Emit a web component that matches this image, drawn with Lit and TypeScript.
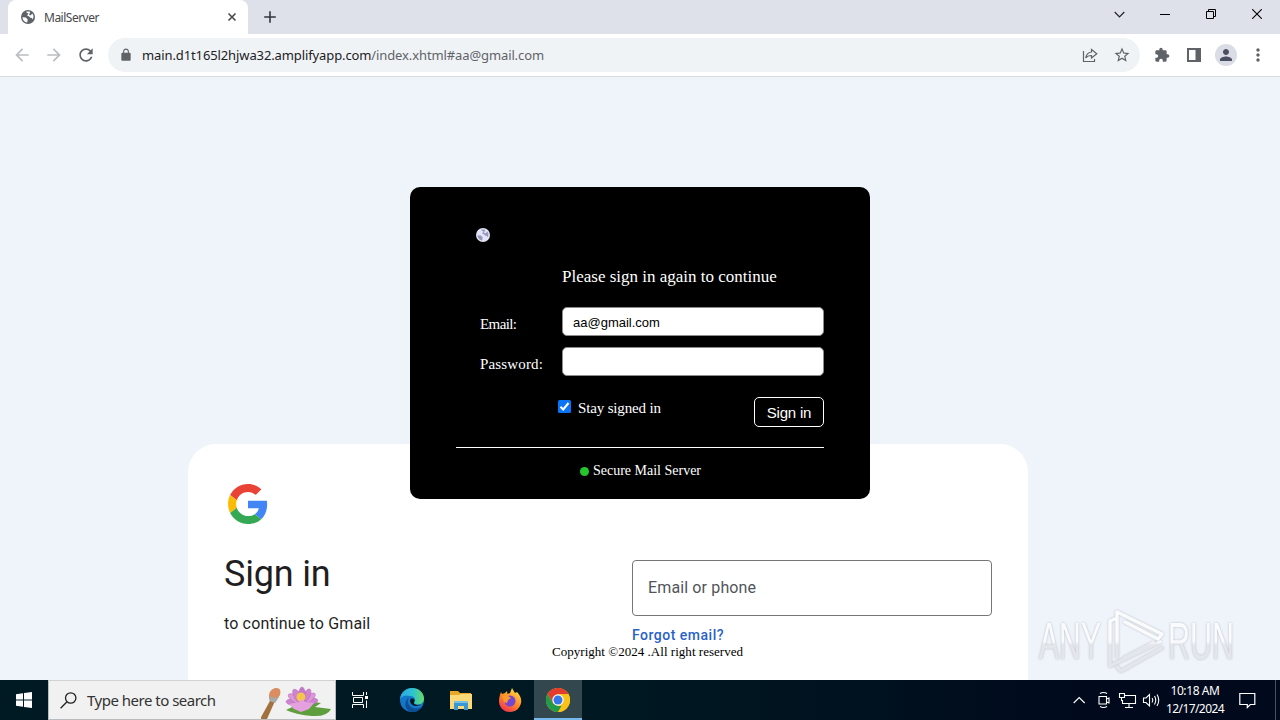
import { LitElement, html, css, svg } from "lit";
import { customElement } from "lit/decorators.js";

const icon = (path: string, size = 20) => html`
    <svg width=${size} height=${size} viewBox="0 0 24 24" fill="currentColor"><path d=${path}></path></svg>
`;

const tabGlobe = (size: number, sea: string, land: string) => html`
    <svg width=${size} height=${size} viewBox="0 0 14 14">
        <circle cx="7" cy="7" r="7" fill=${sea}></circle>
        <path fill=${land} d="M1.500 7.200 4.800 7.500 6.600 9.200 6.300 12.400 C3.600 12.200 1.500 9.800 1.500 7.200Z M5 1.900 C6 1.400 8 1.300 9 1.800 L8.700 3.800 6.800 4.200 6.300 6 8 6.300 9.300 7.800 11 8 11.600 9.500 C12.700 7.600 12.900 5.300 11.300 3.500 L9.800 5.200 8.600 5.300 8.200 4.200Z"></path>
    </svg>
`;

@customElement("browser-bar")
class BrowserBar extends LitElement {
    static styles = css`
        :host {
            display: block;
            font-family: "Noto Sans", "Open Sans", sans-serif;
            color: #202124;
        }

        svg {
            display: block;
            flex: none;
        }

        .tabs {
            display: flex;
            height: 34px;
            background: #dee1e9;
        }

        .tab {
            display: flex;
            align-items: center;
            box-sizing: border-box;
            width: 240px;
            margin-left: 8px;
            padding: 0 11px 0 13px;
            border-radius: 8px 8px 0 0;
            background: #fff;
            font-size: 12px;
        }

        .tab-title {
            flex: 1;
            margin-left: 9px;
            letter-spacing: -0.5px;
            color: #45484c;
        }

        .new-tab {
            display: flex;
            align-items: center;
            margin-left: 16px;
        }

        .window-buttons {
            display: flex;
            align-items: center;
            margin-left: auto;
            height: 28px;
        }

        .window-buttons span {
            display: flex;
            justify-content: center;
            width: 46px;
        }

        .toolbar {
            display: flex;
            align-items: center;
            box-sizing: border-box;
            height: 43px;
            padding: 0 12px;
            border-bottom: 1px solid #d9dbde;
            background: #fff;
            color: #5f6368;
        }

        .arrow {
            color: #bbbdc0;
        }

        .nav {
            display: flex;
            gap: 12px;
        }

        .address {
            display: flex;
            align-items: center;
            box-sizing: border-box;
            width: 1032px;
            height: 34px;
            margin-left: 12px;
            padding: 0 9px 0 11px;
            border-radius: 17px;
            background: #f0f3f6;
        }

        .url {
            flex: 1;
            margin-left: 9px;
            font-size: 13px;
            letter-spacing: -0.11px;
            white-space: nowrap;
        }

        .url b {
            font-weight: 400;
            color: #202124;
        }

        .address-icons {
            display: flex;
            gap: 14px;
        }

        .extras {
            display: flex;
            align-items: center;
            margin-left: 12px;
            gap: 12px;
        }

        .puzzle {
            display: flex;
            justify-content: center;
            width: 20px;
        }

        .avatar {
            display: flex;
            align-items: center;
            justify-content: center;
            width: 22px;
            height: 22px;
            margin: 0 -1px;
            border-radius: 50%;
            background: #dadce6;
            color: #4b4f63;
        }
    `;

    render() {
        return html`
            <div class="tabs">
                <div class="tab">
                    ${tabGlobe(14, "#5f6368", "#fff")}
                    <span class="tab-title">MailServer</span>
                    <svg width="10" height="10" viewBox="0 0 10 10" stroke="#45484c" stroke-width="1.600"><path d="M1.500 1.500 8.500 8.500M8.500 1.500 1.500 8.500"></path></svg>
                </div>
                <div class="new-tab">
                    <svg width="12" height="12" viewBox="0 0 12 12" stroke="#33363b" stroke-width="1.600"><path d="M6 .2V11.800M.2 6H11.800"></path></svg>
                </div>
                <div class="window-buttons">
                    <span><svg width="11" height="11" viewBox="0 0 11 11" fill="none" stroke="#222" stroke-width="1.200"><path d="M.7 3 5.500 7.800 10.300 3"></path></svg></span>
                    <span><svg width="10" height="10" viewBox="0 0 10 10" stroke="#000"><path d="M0 5.500H10"></path></svg></span>
                    <span><svg width="10" height="10" viewBox="0 0 10 10" fill="none" stroke="#000"><path d="M.5 2.500h7v7h-7zM2.500 2.500v-2h7v7h-2"></path></svg></span>
                    <span><svg width="10" height="10" viewBox="0 0 10 10" stroke="#000" stroke-width="1.100"><path d="M.2 .2 9.800 9.800M9.800 .2 .2 9.800"></path></svg></span>
                </div>
            </div>
            <div class="toolbar">
                <div class="nav">
                    <span class="arrow">${icon("M20 11H7.830l5.590-5.590L12 4l-8 8 8 8 1.410-1.410L7.830 13H20v-2z")}</span>
                    <span class="arrow">${icon("M12 4l-1.410 1.410L16.170 11H4v2h12.170l-5.580 5.590L12 20l8-8z")}</span>
                    ${icon("M17.650 6.350C16.200 4.900 14.210 4 12 4c-4.420 0-7.990 3.580-7.990 8s3.570 8 7.990 8c3.730 0 6.840-2.550 7.730-6h-2.080c-.82 2.330-3.040 4-5.650 4-3.310 0-6-2.690-6-6s2.690-6 6-6c1.660 0 3.140.69 4.220 1.780L13 11h7V4l-2.350 2.350z")}
                </div>
                <div class="address">
                    ${icon("M18 8h-1V6c0-2.760-2.240-5-5-5S7 3.240 7 6v2H6c-1.100 0-2 .9-2 2v10c0 1.100.9 2 2 2h12c1.100 0 2-.9 2-2V10c0-1.100-.9-2-2-2zM8.900 8V6c0-1.710 1.390-3.100 3.100-3.100s3.100 1.390 3.100 3.100v2H8.900z", 14)}
                    <span class="url"><b>main.d1t165l2hjwa32.amplifyapp.com</b>/index.xhtml#aa@gmail.com</span>
                    <div class="address-icons">
                        <svg width="18" height="18" viewBox="0 0 18 18" fill="none" stroke="currentColor" stroke-width="1.200">
                            <path d="M2.500 5v10.500h11V13"></path>
                            <path d="M10.500 3.500 15.800 7.700 10.500 12V9.500C7.700 9.500 6 10.300 4.700 12 5.200 8.800 7 6.400 10.500 6Z"></path>
                        </svg>
                        ${icon("M22 9.240l-7.190-.62L12 2 9.190 8.630 2 9.240l5.460 4.730L5.820 21 12 17.270 18.180 21l-1.630-7.030L22 9.240zM12 15.400l-3.760 2.270 1-4.280-3.320-2.880 4.380-.38L12 6.100l1.710 4.040 4.380.38-3.320 2.880 1 4.280L12 15.400z", 18)}
                    </div>
                </div>
                <div class="extras">
                    <span class="puzzle">${icon("M20.500 11H19V7c0-1.100-.9-2-2-2h-4V3.500C13 2.120 11.880 1 10.500 1S8 2.120 8 3.500V5H4c-1.100 0-1.990.9-1.990 2v3.800H3.500c1.490 0 2.700 1.210 2.700 2.700s-1.210 2.700-2.700 2.700H2V20c0 1.100.9 2 2 2h3.800v-1.500c0-1.490 1.210-2.700 2.700-2.700s2.700 1.210 2.700 2.700V22H17c1.100 0 2-.9 2-2v-4h1.500c1.380 0 2.500-1.120 2.500-2.500S21.880 11 20.500 11z", 16)}</span>
                    <svg width="20" height="20" viewBox="0 0 20 20"><path fill="#5f6368" fill-rule="evenodd" d="M3 3h14v14H3zM5 5v10h6.500V5z"></path></svg>
                    <span class="avatar">${icon("M12 12c2.210 0 4-1.790 4-4s-1.790-4-4-4-4 1.790-4 4 1.790 4 4 4zm0 2c-2.670 0-8 1.340-8 4v2h16v-2c0-2.660-5.330-4-8-4z", 18)}</span>
                    ${icon("M12 8c1.100 0 2-.9 2-2s-.9-2-2-2-2 .9-2 2 .9 2 2 2zm0 2c-1.100 0-2 .9-2 2s.9 2 2 2 2-.9 2-2-.9-2-2-2zm0 6c-1.100 0-2 .9-2 2s.9 2 2 2 2-.9 2-2-.9-2-2-2z")}
                </div>
            </div>
        `;
    }
}

@customElement("google-page")
class GooglePage extends LitElement {
    static styles = css`
        :host {
            display: block;
            height: 603px;
            overflow: hidden;
            background: #eff3fa;
            font-family: Roboto, sans-serif;
            color: #1f1f1f;
        }

        .card {
            display: grid;
            grid-template-columns: 360px 360px;
            column-gap: 48px;
            box-sizing: border-box;
            width: 840px;
            height: 384px;
            margin: 367px 0 0 188px;
            padding: 40px 36px 0;
            border-radius: 28px;
            background: #fff;
        }

        .logo {
            display: block;
            margin-left: 4px;
        }

        h1 {
            margin: 28px 0 0;
            font-size: 36px;
            line-height: 44px;
            font-weight: 400;
            letter-spacing: -0.2px;
        }

        .subtitle {
            margin: 16px 0 0;
            font-size: 16px;
            line-height: 24px;
            letter-spacing: 0.15px;
        }

        .form {
            padding-top: 76px;
        }

        .field {
            display: flex;
            align-items: center;
            box-sizing: border-box;
            height: 56px;
            padding: 0 15px 2px;
            border: 1px solid #747775;
            border-radius: 4px;
            font-size: 16px;
            letter-spacing: 0.13px;
            color: #51555a;
        }

        .forgot {
            margin-top: 9px;
            font-size: 14px;
            line-height: 20px;
            font-weight: 500;
            letter-spacing: 0.5px;
            color: #2862c8;
        }
    `;

    render() {
        return html`
            <div class="card">
                <div>
                    <svg class="logo" width="40" height="40" viewBox="0 0 48 48">
                        <path fill="#ea4335" d="M24 9.500c3.540 0 6.710 1.220 9.210 3.600l6.850-6.850C35.900 2.380 30.470 0 24 0 14.620 0 6.510 5.380 2.560 13.220l7.980 6.190C12.430 13.720 17.740 9.500 24 9.500z"></path>
                        <path fill="#4285f4" d="M46.980 24.550c0-1.570-.15-3.090-.38-4.550H24v9.020h12.940c-.58 2.960-2.260 5.480-4.780 7.180l7.730 6c4.510-4.180 7.090-10.360 7.090-17.650z"></path>
                        <path fill="#fbbc05" d="M10.530 28.590c-.48-1.450-.76-2.990-.76-4.590s.27-3.140.76-4.590l-7.980-6.190C.92 16.460 0 20.120 0 24c0 3.880.92 7.540 2.560 10.780l7.970-6.190z"></path>
                        <path fill="#34a853" d="M24 48c6.480 0 11.930-2.130 15.890-5.810l-7.730-6c-2.150 1.450-4.920 2.300-8.160 2.300-6.260 0-11.570-4.220-13.470-9.910l-7.980 6.190C6.510 42.620 14.620 48 24 48z"></path>
                    </svg>
                    <h1>Sign in</h1>
                    <p class="subtitle">to continue to Gmail</p>
                </div>
                <div class="form">
                    <div class="field">Email or phone</div>
                    <div class="forgot">Forgot email?</div>
                </div>
            </div>
        `;
    }
}

@customElement("mail-dialog")
class MailDialog extends LitElement {
    static styles = css`
        :host {
            display: block;
            box-sizing: border-box;
            width: 460px;
            height: 312px;
            padding: 41px 46px 0;
            border-radius: 10px;
            background: #000;
            color: #fff;
            font-family: "Liberation Serif", serif;
            font-size: 15px;
        }

        svg {
            display: block;
        }

        .favicon {
            margin-left: 20px;
        }

        .message {
            margin: 24px 0 0 106px;
            font-size: 17px;
            line-height: 22px;
            white-space: nowrap;
        }

        .row {
            display: grid;
            grid-template-columns: 82px 262px;
            height: 29px;
            margin: 11px 0 0 24px;
        }

        .row.first {
            margin-top: 19px;
        }

        .label {
            padding-top: 8px;
            line-height: 18px;
            letter-spacing: 0.15px;
        }

        .first .label {
            letter-spacing: -0.6px;
        }

        .input {
            box-sizing: border-box;
            padding: 2px 10px 0;
            border: 1px solid #8c8c8c;
            border-radius: 5px;
            background: #fff;
            color: #000;
            font: 13px/25px "Liberation Sans", sans-serif;
        }

        .actions {
            display: flex;
            align-items: flex-start;
            height: 50px;
            margin-top: 21px;
            padding-left: 102px;
        }

        .check {
            margin-top: 3px;
        }

        .stay {
            flex: 1;
            margin: 2px 0 0 7px;
            line-height: 18px;
            letter-spacing: -0.15px;
        }

        .submit {
            box-sizing: border-box;
            width: 70px;
            height: 30px;
            padding: 0;
            border: 1px solid #fff;
            border-radius: 5px;
            background: #000;
            color: #fff;
            font: 15px/30px "Liberation Sans", sans-serif;
            letter-spacing: -0.2px;
        }

        .footer {
            display: flex;
            align-items: center;
            justify-content: center;
            gap: 4px;
            border-top: 1px solid #fff;
            padding: 14px 0 0 1px;
            font-size: 14px;
            line-height: 18px;
        }

        .dot {
            width: 9px;
            height: 9px;
            margin-top: 1px;
            border-radius: 50%;
            background: #25c62c;
        }
    `;

    render() {
        return html`
            <div class="favicon">${tabGlobe(14, "#e4e4f6", "#9598bd")}</div>
            <div class="message">Please sign in again to continue</div>
            <div class="row first">
                <span class="label">Email:</span>
                <div class="input">aa@gmail.com</div>
            </div>
            <div class="row">
                <span class="label">Password:</span>
                <div class="input"></div>
            </div>
            <div class="actions">
                <svg class="check" width="13" height="13" viewBox="0 0 13 13">
                    <rect width="13" height="13" rx="1.500" fill="#0b74f5"></rect>
                    <path fill="none" stroke="#fff" stroke-width="2" d="M2.500 6.800 5.200 9.500 10.500 3"></path>
                </svg>
                <span class="stay">Stay signed in</span>
                <button class="submit">Sign in</button>
            </div>
            <div class="footer"><i class="dot"></i>Secure Mail Server</div>
        `;
    }
}

@customElement("task-bar")
class TaskBar extends LitElement {
    static styles = css`
        :host {
            display: flex;
            height: 40px;
            background: linear-gradient(90deg, #001a24 0, #001821 50%, #000a1c 85%, #000a1c 100%);
            color: #fff;
            font-family: "Noto Sans", "Open Sans", sans-serif;
        }

        svg {
            display: block;
            flex: none;
        }

        .app {
            display: flex;
            align-items: center;
            justify-content: center;
            box-sizing: border-box;
            width: 49px;
            height: 40px;
        }

        .start {
            width: 48px;
        }

        .task-view {
            margin-right: 2px;
        }

        .active {
            width: 48px;
            padding-top: 2px;
            border-bottom: 2px solid #76b9ed;
            background: #33474f;
        }

        .search {
            display: flex;
            align-items: center;
            box-sizing: border-box;
            width: 288px;
            padding-left: 11px;
            border: 1px solid #b9bcbe;
            border-top-color: #d0d2d3;
            background: #f1f1f1;
            color: #333;
            font-size: 15px;
        }

        .hint {
            flex: 1;
            margin-left: 10px;
            letter-spacing: -0.5px;
            white-space: nowrap;
        }

        .tray {
            display: flex;
            align-items: center;
            margin-left: auto;
        }

        .clock {
            width: 60px;
            margin-left: 4px;
            font-size: 12px;
            line-height: 18px;
            letter-spacing: -0.6px;
            text-align: center;
            white-space: nowrap;
        }

        .clock span {
            letter-spacing: -0.4px;
        }

        .notice {
            margin: 0 19px 0 14px;
        }

        .edge {
            width: 1px;
            height: 40px;
            margin-right: 4px;
            background: #465163;
        }
    `;

    petal(angle: number, color: string) {
        return svg`<ellipse cx="41" cy="15" rx="3.500" ry="9" fill=${color} stroke="#b667b4" stroke-width=".5" transform="rotate(${angle} 41 22)"></ellipse>`;
    }

    render() {
        return html`
            <div class="app start">
                <svg width="16" height="16" viewBox="0 0 16 16" fill="#fff"><path d="M0 2.200 7 1.200V7.500H0zM8 1 16 0V7.500H8zM0 8.500H7V14.800L0 13.800zM8 8.500H16V16L8 15z"></path></svg>
            </div>
            <div class="search">
                <svg width="17" height="17" viewBox="0 0 17 17" fill="none" stroke="#222" stroke-width="1.300"><circle cx="10.700" cy="6" r="5.200"></circle><path d="M7 9.700.6 16.200"></path></svg>
                <span class="hint">Type here to search</span>
                <svg width="74" height="38" viewBox="0 0 74 38">
                    <path d="M-1 38 10 18 14 20 6 38Z" fill="#a3713e"></path>
                    <path d="M8 18 Q7 9 14 7 Q21 6 19 14 L14 21Z" fill="#d98d60"></path>
                    <path d="M8.500 15 Q13 18 18 16 L14 22 8.500 20Z" fill="#a8a9a6"></path>
                    <path d="M25 29 Q45 19 60 22 L54 26 70 28 Q66 36 51 35 Q36 34 25 29Z" fill="#5f9e3c"></path>
                    ${this.petal(-85, "#cf82d0")}${this.petal(80, "#cf82d0")}
                    ${this.petal(-58, "#dc98d9")}${this.petal(55, "#dc98d9")}
                    ${this.petal(-32, "#d083cf")}${this.petal(30, "#d083cf")}${this.petal(0, "#c678c8")}
                    <ellipse cx="40" cy="16" rx="4.500" ry="4.500" fill="#f4c64c"></ellipse>
                    <path d="M28 23 38 21 41 18 44 21 53 22 48 28 40 31 33 28Z" fill="#e5a0de"></path>
                </svg>
            </div>
            <div class="app task-view">
                <svg width="17" height="16" viewBox="0 0 17 16" fill="none" stroke="#fff"><path d="M.5 0V3.500H11.500V0M.5 16V12.500H11.500V16M1.500 5.500h9v5h-9zM14.500 0V3M14.500 8.500V16"></path><path fill="#fff" stroke="none" d="M13 4h3v3h-3z"></path></svg>
            </div>
            <div class="app">
                <svg width="24" height="24" viewBox="0 0 24 24">
                    <defs><linearGradient id="edge" x1="0" x2="1"><stop offset="0" stop-color="#2aa7e8"></stop><stop offset=".55" stop-color="#2fc3cf"></stop><stop offset="1" stop-color="#69dc63"></stop></linearGradient></defs>
                    <circle cx="12" cy="12" r="12" fill="#1478ca"></circle>
                    <path fill="url(#edge)" d="M0 11C1 4 6 0 12 0c7 0 12 5 12 10.500 0 4-3 6-6.500 6-3 0-4-1.300-3.300-2.500 1.500-2.500.5-6-4-6C6 6.500 2 8 0 11Z"></path>
                    <path fill="#0c4f97" d="M9 9.500c-3 4 0 11 7 11 3 0 5-1 6-2C19 24 13 25 9.500 23.500 4 21 4 12.500 9 9.500Z"></path>
                    <path fill="#001821" d="M10 12c.5-2 4-2.200 4.700.3.200 1.200-1 2-.7 3 .6 1.400 3.500 2.200 6.800 1-3.200 3.300-11 1.800-10.800-4.300Z"></path>
                </svg>
            </div>
            <div class="app">
                <svg width="22" height="19" viewBox="0 0 22 19">
                    <path fill="#e8a928" d="M0 0H8L10 2H21V7H0Z"></path>
                    <path fill="#fbd976" d="M0 4H9L11 3H22V18H0Z"></path>
                    <path fill="#3a97d3" d="M4 10H18V19H14V15H8V19H4Z"></path>
                    <path fill="#77c1e8" d="M4 10H18V12H4Z"></path>
                </svg>
            </div>
            <div class="app">
                <svg width="24" height="24" viewBox="0 0 24 24">
                    <defs><linearGradient id="fox" x1=".8" y1="0" x2=".2" y2="1"><stop offset="0" stop-color="#ffe14a"></stop><stop offset=".5" stop-color="#ff8b26"></stop><stop offset="1" stop-color="#f22b56"></stop></linearGradient></defs>
                    <path fill="url(#fox)" d="M3 4 4 6 7 5 9 3 9.500 6 12 5 14 0 17 5 19 4C22 7 24 11 23 15c-1 5-5 9-11 9C5 24 1 19 1 13 1 9 2 7 3 4Z"></path>
                    <circle cx="12" cy="13" r="5.500" fill="#7546cf"></circle>
                    <path fill="#ff9a2a" d="M4 8 10 8 13 10 10 12 9 15 6 14Z"></path>
                </svg>
            </div>
            <div class="app active">
                <svg width="24" height="24" viewBox="0 0 24 24">
                    <circle cx="12" cy="12" r="12" fill="#fbc116"></circle>
                    <path fill="#e33b2e" d="M1.600 6A12 12 0 0 1 22.400 6H12L6.800 15Z"></path>
                    <path fill="#229a4a" d="M1.600 6 6.800 15 12 18H17.200L12 24A12 12 0 0 1 1.600 6Z"></path>
                    <path fill="#fbc116" d="M22.400 6A12 12 0 0 1 12 24L17.200 15 12 6Z"></path>
                    <circle cx="12" cy="12" r="5.700" fill="#fff"></circle>
                    <circle cx="12" cy="12" r="4.500" fill="#3477e8"></circle>
                </svg>
            </div>
            <div class="tray">
                <svg width="88" height="18" viewBox="0 0 88 18" fill="none" stroke="#fff" stroke-width="1.100">
                    <path d="M.7 12 6.200 6.500 11.700 12"></path>
                    <path d="M27 2.500Q30.500 .5 34 2.500M27 15.500Q30.500 17.500 34 15.500M26 5.500h7.500v7.500H26zM33.500 8l2.500-1v5l-2.500-1"></path>
                    <path d="M52 4.500H62.500V12.500H49.500V9M56 12.500V16M52 16.500H60M46.500 2.500h5v4h-5zM48.500 6.500V9.500H50"></path>
                    <path d="M70.500 7H73L76.500 3.500V15L73 11.500H70.500ZM79 7Q80.500 9 79 11.500M81.500 5Q84 9 81.500 13.500M84 3.500Q87.500 9 84 15"></path>
                </svg>
                <div class="clock"><span>10:18 AM</span><br>12/17/2024</div>
                <svg class="notice" width="17" height="17" viewBox="0 0 17 17" fill="none" stroke="#fff" stroke-width="1.200"><path d="M.8 1.500H15.800V12.500H11.300L8.300 15.500V12.500H.8Z"></path></svg>
                <i class="edge"></i>
            </div>
        `;
    }
}

@customElement("app-root")
class AppRoot extends LitElement {
    static styles = css`
        :host {
            display: block;
            position: relative;
            width: 1280px;
            height: 720px;
            overflow: hidden;
        }

        .dialog {
            position: absolute;
            top: 187px;
            left: 410px;
        }

        .copyright {
            position: absolute;
            top: 643px;
            left: 552px;
            font: 13px/18px "Liberation Serif", serif;
            letter-spacing: 0.03px;
            color: #000;
            white-space: nowrap;
        }

        .watermark {
            position: absolute;
            top: 605px;
            left: 1035px;
            overflow: visible;
            filter: drop-shadow(0 0 1px #b9bdc4);
        }

        .brand {
            font-family: "Liberation Sans", sans-serif;
            font-size: 51px;
        }
    `;

    render() {
        return html`
            <browser-bar></browser-bar>
            <google-page></google-page>
            <task-bar></task-bar>
            <mail-dialog class="dialog"></mail-dialog>
            <div class="copyright">Copyright ©2024 .All right reserved</div>
            <svg class="watermark" width="205" height="72" viewBox="0 0 205 72">
                <defs>
                    <linearGradient id="fade" x1="0" y1="0" x2="0" y2="1">
                        <stop offset=".5" stop-color="#fafbfd"></stop>
                        <stop offset=".56" stop-color="#e3e6ea"></stop>
                    </linearGradient>
                </defs>
                <g class="brand" fill="url(#fade)">
                    <text x="4" y="54" textLength="62" lengthAdjust="spacingAndGlyphs">ANY</text>
                    <text x="133" y="54" textLength="66" lengthAdjust="spacingAndGlyphs">RUN</text>
                </g>
                <path fill="none" stroke="url(#fade)" stroke-width="3.500" stroke-linejoin="round" stroke-linecap="round" d="M82 52V7L127 29 123 34 90 17M80 14 75 16V61L125 37M89 53 118 38M82 62 86 66 127 43"></path>
            </svg>
        `;
    }
}
